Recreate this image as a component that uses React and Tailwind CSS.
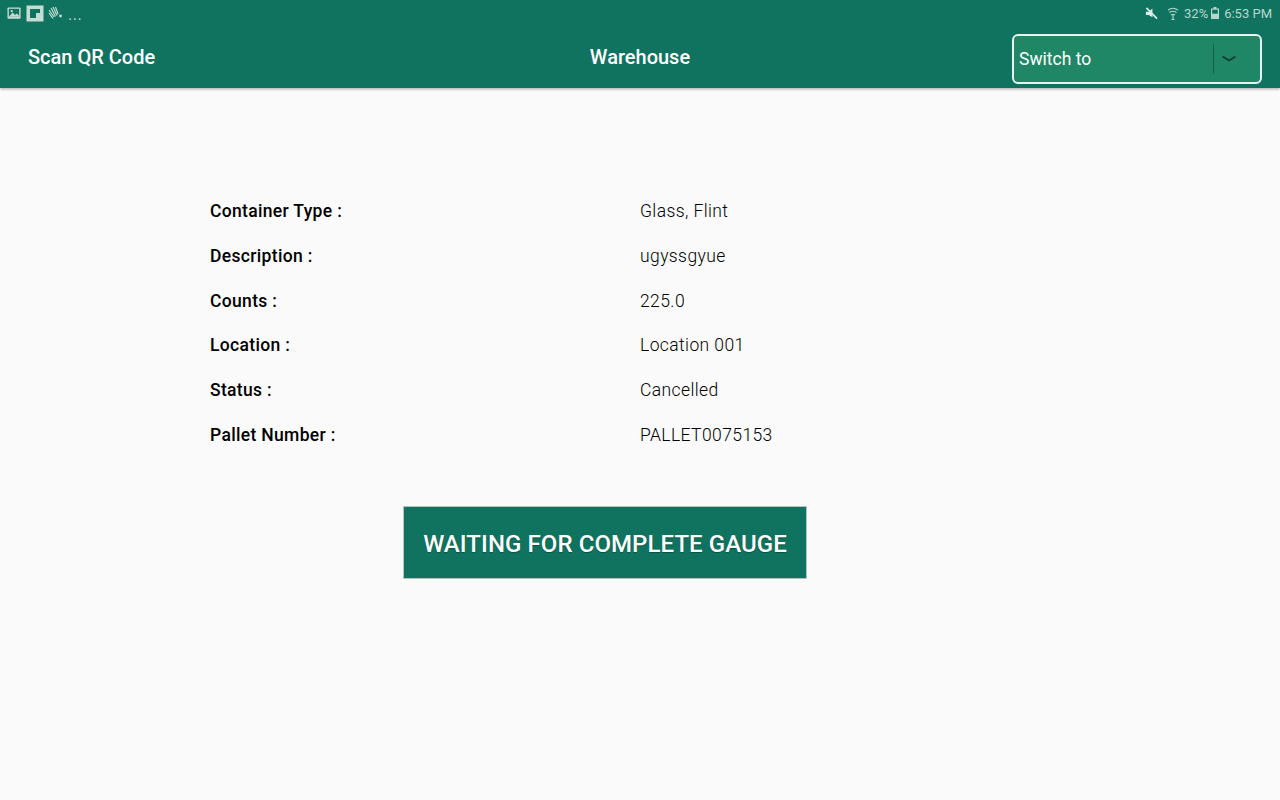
const rows = [
  ["Container Type :", "Glass, Flint"],
  ["Description :", "ugyssgyue"],
  ["Counts :", "225.0"],
  ["Location :", "Location 001"],
  ["Status :", "Cancelled"],
  ["Pallet Number :", "PALLET0075153"],
];

function StatusLeft() {
  return (
    <div className="flex items-center gap-[3px] text-[#b9d6cd]">
      <svg width="15" height="14" viewBox="0 0 16 14" className="ml-[7px]">
        <rect x="0.5" y="1" width="14" height="12" rx="1" fill="#c3dcd4" />
        <rect x="2" y="2.5" width="11" height="8.5" fill="#0f735f" />
        <path d="M2 11 L6 6.5 L8.5 9 L10.5 7.5 L13 10 V11 Z" fill="#c3dcd4" />
        <circle cx="5" cy="5" r="1.2" fill="#c3dcd4" />
      </svg>
      <svg width="18" height="17" viewBox="0 0 18 17" className="ml-[1px]">
        <rect width="17" height="16" x="0.5" y="0.5" fill="#c3dcd4" />
        <path d="M4 4 H14 V8 H10 V13 H4 Z" fill="#0f735f" />
      </svg>
      <svg width="16" height="14" viewBox="0 0 16 14" fill="none" stroke="#c3dcd4" strokeWidth="1.2" className="ml-[1px]">
        <path d="M1 4 L6 11 M3 2 L7.5 10.5 M5 1 L9 9.5 M7.5 1 L10 8 M1 7 L5 12.5" />
        <circle cx="12.5" cy="10" r="1.4" fill="#c3dcd4" stroke="none" />
      </svg>
      <span className="ml-[1px] mt-[3px] text-[16px] leading-none tracking-[0.5px]">...</span>
    </div>
  );
}

function StatusRight() {
  return (
    <div className="flex items-center text-[13px] leading-none text-[#b9d6cd]">
      <svg width="13" height="13" viewBox="0 0 14 14" className="mr-[9px]">
        <path d="M1 5 H4 L8 1.5 V11 L4 8.5 H1 Z" fill="#dcebe6" />
        <path d="M1.5 1 L13 12.5" stroke="#dcebe6" strokeWidth="1.8" />
      </svg>
      <svg width="12" height="13" viewBox="0 0 12 13" fill="none" stroke="#b9d6cd" strokeWidth="1.1" className="mr-[5px]">
        <path d="M1 3 Q6 -0.5 11 3 M2.5 5.5 Q6 3 9.5 5.5 M4 8 Q6 6.5 8 8" />
        <path d="M6 8 V12.5 M4.5 12.5 H7.5" />
      </svg>
      <span>32%</span>
      <svg width="8" height="12" viewBox="0 0 8 12" className="ml-[3px] mr-[5px]">
        <rect x="2.5" width="3" height="2" fill="#b9d6cd" />
        <rect y="1.5" width="8" height="10.5" fill="#b9d6cd" />
        <rect x="1.2" y="2.7" width="5.6" height="4" fill="#0f735f" />
      </svg>
      <span>6:53 PM</span>
    </div>
  );
}

export default function App() {
  return (
    <div className="w-[1280px] h-[800px] overflow-hidden bg-[#fafafa] font-['Roboto',sans-serif]">
      <header className="h-[88px] bg-[#0f735f] shadow-[0_1px_3px_rgba(0,0,0,0.35)] relative">
        <div className="h-[26px] flex items-center justify-between pr-[8px]">
          <StatusLeft />
          <StatusRight />
        </div>
        <div className="h-[62px] grid grid-cols-3 items-center">
          <div className="pl-[28px] text-[20px] font-medium text-white">Scan QR Code</div>
          <div className="text-center text-[20px] font-medium text-white">Warehouse</div>
          <div className="flex justify-end pr-[18px] pt-[4px]">
            <div className="w-[250px] h-[50px] rounded-[6px] border-2 border-[#e6f2ee] bg-[#1f8766] flex items-center">
              <span className="pl-[5px] flex-1 text-[17.5px] text-white">Switch to</span>
              <div className="w-[47px] h-[30px] border-l border-[#13604f] flex items-center justify-center pr-[15px]">
                <svg width="16" height="8" viewBox="0 0 16 8" fill="none" stroke="#0f3d33" strokeWidth="1.8">
                  <path d="M1.5 1.5 L8 5.5 L14.5 1.5" />
                </svg>
              </div>
            </div>
          </div>
        </div>
      </header>

      <main className="pt-[101px] pl-[210px]">
        <div className="flex flex-col">
          {rows.map(([label, value]) => (
            <div key={label} className="flex h-[44.7px] items-center text-[17.5px] text-black">
              <div className="w-[430px] font-medium tracking-[0.33px]">{label}</div>
              <div className="font-light tracking-[0.4px]">{value}</div>
            </div>
          ))}
        </div>
        <div className="mt-[49px] ml-[193px]">
          <button className="w-[404px] h-[73px] pt-[2px] bg-[#0f735f] border border-[#b5c4bf] text-[24px] font-medium tracking-[0.08px] text-white whitespace-nowrap [text-shadow:0_1px_1px_rgba(0,0,0,0.3)]">
            WAITING FOR COMPLETE GAUGE
          </button>
        </div>
      </main>
    </div>
  );
}
